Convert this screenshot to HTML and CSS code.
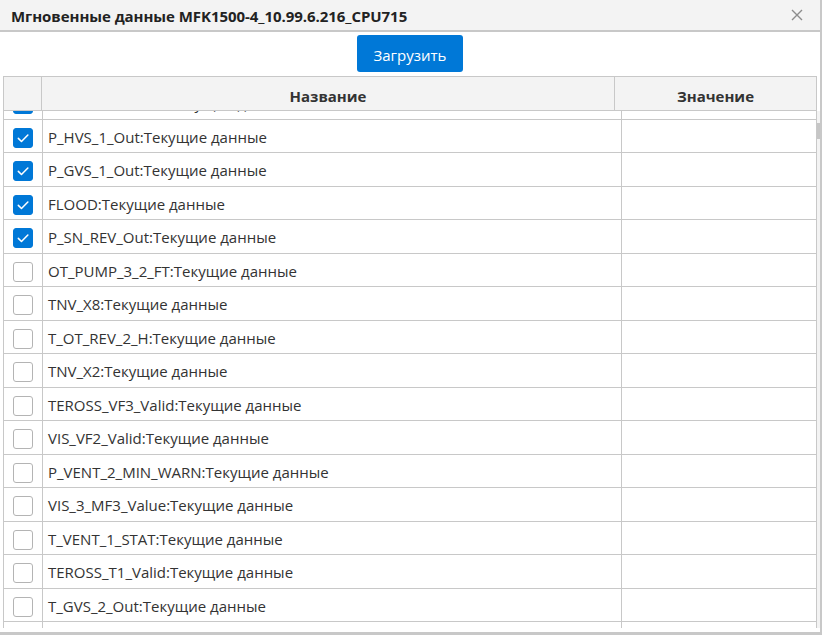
FILE: index.html
```html
<!DOCTYPE html>
<html lang="ru">
<head>
<meta charset="utf-8">
<title>Мгновенные данные</title>
<link rel="stylesheet" href="styles.css">
</head>
<body>
<div class="window">
  <div class="titlebar">
    <div class="title">Мгновенные данные MFK1500-4_10.99.6.216_CPU715</div>
    <svg class="close" width="12" height="12" viewBox="0 0 12 12"><path d="M1 1 L11 11 M11 1 L1 11" stroke="#8c8c8c" stroke-width="1.4" fill="none"/></svg>
  </div>
  <div class="content">
    <div class="toolbar"><button class="btn">Загрузить</button></div>
    <div class="table">
      <div class="thead">
        <div class="hcell hc1"></div>
        <div class="hcell hc2">Название</div>
        <div class="hcell hc3">Значение</div>
      </div>
      <div class="tbody-wrap">
        <div class="tbody">
          <div class="rows">
            <div class="row first"><div class="cell c1"><span class="cb on"><svg viewBox="0 0 20 20"><path d="M4.8 10.4 L8.3 13.9 L15.4 6.6" /></svg></span></div><div class="cell c2">P_OT_SUP_1_Out:Текущие данные</div><div class="cell c3"></div></div>
            <div class="row"><div class="cell c1"><span class="cb on"><svg viewBox="0 0 20 20"><path d="M4.8 10.4 L8.3 13.9 L15.4 6.6" /></svg></span></div><div class="cell c2">P_HVS_1_Out:Текущие данные</div><div class="cell c3"></div></div>
            <div class="row"><div class="cell c1"><span class="cb on"><svg viewBox="0 0 20 20"><path d="M4.8 10.4 L8.3 13.9 L15.4 6.6" /></svg></span></div><div class="cell c2">P_GVS_1_Out:Текущие данные</div><div class="cell c3"></div></div>
            <div class="row"><div class="cell c1"><span class="cb on"><svg viewBox="0 0 20 20"><path d="M4.8 10.4 L8.3 13.9 L15.4 6.6" /></svg></span></div><div class="cell c2">FLOOD:Текущие данные</div><div class="cell c3"></div></div>
            <div class="row"><div class="cell c1"><span class="cb on"><svg viewBox="0 0 20 20"><path d="M4.8 10.4 L8.3 13.9 L15.4 6.6" /></svg></span></div><div class="cell c2">P_SN_REV_Out:Текущие данные</div><div class="cell c3"></div></div>
            <div class="row"><div class="cell c1"><span class="cb"></span></div><div class="cell c2">OT_PUMP_3_2_FT:Текущие данные</div><div class="cell c3"></div></div>
            <div class="row"><div class="cell c1"><span class="cb"></span></div><div class="cell c2">TNV_X8:Текущие данные</div><div class="cell c3"></div></div>
            <div class="row"><div class="cell c1"><span class="cb"></span></div><div class="cell c2">T_OT_REV_2_H:Текущие данные</div><div class="cell c3"></div></div>
            <div class="row"><div class="cell c1"><span class="cb"></span></div><div class="cell c2">TNV_X2:Текущие данные</div><div class="cell c3"></div></div>
            <div class="row"><div class="cell c1"><span class="cb"></span></div><div class="cell c2">TEROSS_VF3_Valid:Текущие данные</div><div class="cell c3"></div></div>
            <div class="row"><div class="cell c1"><span class="cb"></span></div><div class="cell c2">VIS_VF2_Valid:Текущие данные</div><div class="cell c3"></div></div>
            <div class="row"><div class="cell c1"><span class="cb"></span></div><div class="cell c2">P_VENT_2_MIN_WARN:Текущие данные</div><div class="cell c3"></div></div>
            <div class="row"><div class="cell c1"><span class="cb"></span></div><div class="cell c2">VIS_3_MF3_Value:Текущие данные</div><div class="cell c3"></div></div>
            <div class="row"><div class="cell c1"><span class="cb"></span></div><div class="cell c2">T_VENT_1_STAT:Текущие данные</div><div class="cell c3"></div></div>
            <div class="row"><div class="cell c1"><span class="cb"></span></div><div class="cell c2">TEROSS_T1_Valid:Текущие данные</div><div class="cell c3"></div></div>
            <div class="row"><div class="cell c1"><span class="cb"></span></div><div class="cell c2">T_GVS_2_Out:Текущие данные</div><div class="cell c3"></div></div>
            <div class="row"><div class="cell c1"></div><div class="cell c2"></div><div class="cell c3"></div></div>
          </div>
        </div>
        <div class="track"><div class="thumb"></div></div>
      </div>
    </div>
  </div>
</div>
</body>
</html>
```

FILE: styles.css
```css
* { box-sizing: border-box; }
html, body { margin: 0; padding: 0; background: #fff; }
body { font-family: "Open Sans", "Noto Sans", sans-serif; color: #333; }

.window {
  width: 822px;
  height: 635px;
  border-right: 2px solid #c8c8c8;
  border-bottom: 3px solid #c8c8c8;
  display: flex;
  flex-direction: column;
  overflow: hidden;
}

.titlebar {
  height: 32px;
  flex: none;
  background: #f3f3f3;
  border-bottom: 2px solid #c8c8c8;
  display: flex;
  align-items: center;
  justify-content: space-between;
  padding: 1px 17px 0 11px;
}
.title {
  font-weight: 700;
  font-size: 15px;
  color: #222;
  letter-spacing: -0.05px;
}
.close { display: block; margin-top: -1px; }

.content {
  flex: 1;
  display: flex;
  flex-direction: column;
  padding: 3px 0 0 3px;
  min-height: 0;
}

.toolbar {
  display: flex;
  justify-content: center;
  padding-right: 3px;
  height: 41px;
  flex: none;
}
.btn {
  width: 106px;
  height: 37px;
  border: none;
  border-radius: 3px;
  background: #0078d7;
  color: #fff;
  font-family: "Open Sans", "Noto Sans", sans-serif;
  font-size: 15px;
  padding: 3px 0 0 0;
}

.table { display: flex; flex-direction: column; }

.thead {
  display: flex;
  height: 35px;
  border-top: 1px solid #c8c8c8;
  border-bottom: 1px solid #c8c8c8;
  border-left: 1px solid #c8c8c8;
  background: #f3f3f3;
  width: 814px;
}
.hcell {
  border-right: 1px solid #c8c8c8;
  display: flex;
  align-items: center;
  justify-content: center;
  font-weight: 700;
  font-size: 15px;
  color: #333;
  padding-top: 4px;
}
.hc1 { width: 38px; }
.hc2 { width: 573px; }
.hc3 { width: 202px; }

.tbody-wrap {
  display: flex;
  height: 517px;
}
.tbody {
  width: 814px;
  height: 517px;
  overflow: hidden;
  border-left: 1px solid #c8c8c8;
}
.rows { margin-top: -25px; }
.row {
  display: flex;
  height: 33.5px;
  border-bottom: 1px solid #c8c8c8;
}
.cell {
  border-right: 1px solid #c8c8c8;
  display: flex;
  align-items: center;
  font-size: 15px;
  color: #333;
}
.c1 { width: 39px; justify-content: center; padding-top: 4px; }
.c2 { width: 579px; padding-left: 5px; padding-top: 2px; }
.c3 { width: 195px; }

.cb {
  width: 20px;
  height: 20px;
  border: 1px solid #b4b4b4;
  border-radius: 3px;
  background: #fff;
  display: block;
}
.cb.on { background: #0078d7; border-color: #0078d7; }
.cb svg { display: block; width: 18px; height: 18px; }
.cb svg path { fill: none; stroke: #fff; stroke-width: 1.7; stroke-linecap: round; stroke-linejoin: round; }

.track {
  width: 3px;
  height: 517px;
  background: #f3f3f3;
  padding-top: 12px;
}
.thumb {
  width: 3px;
  height: 16px;
  background: #c6c6c6;
}
```
